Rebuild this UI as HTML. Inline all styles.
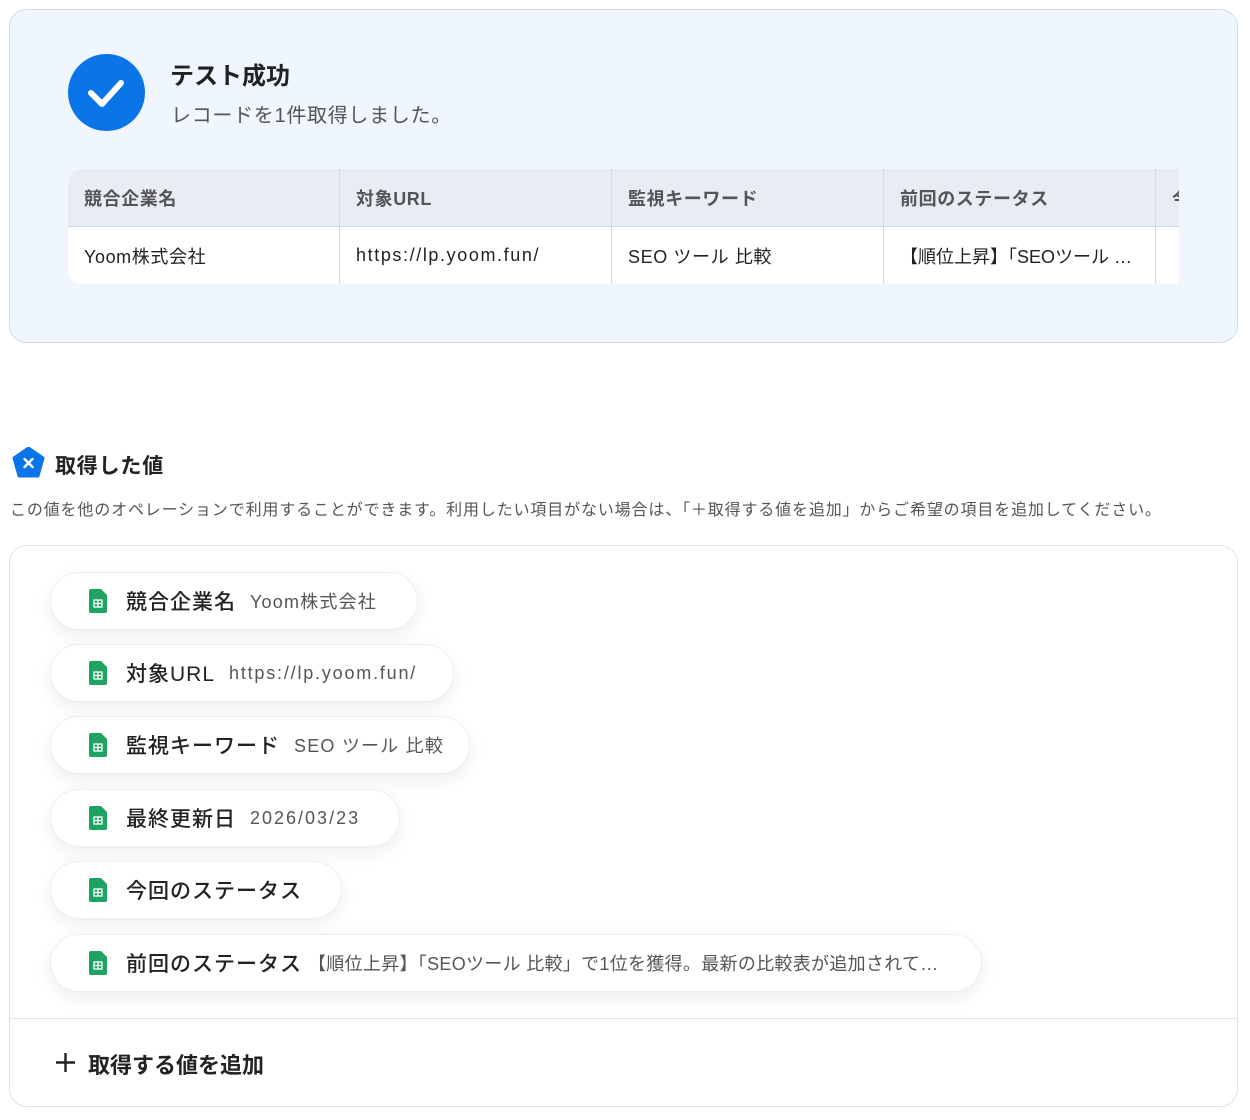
<!DOCTYPE html>
<html><head><meta charset="utf-8"><style>
*{box-sizing:border-box;margin:0;padding:0}
body{width:1250px;height:1120px;background:#fff;font-family:"Liberation Sans","Noto Sans CJK JP",sans-serif;position:relative;overflow:hidden;color:#222}
.abs{position:absolute}
.card{left:9px;top:9px;width:1229px;height:334px;background:#eff6fe;border:1px solid #d3dce6;border-radius:18px}
.tbl{left:68px;top:169px;width:1111px;height:115px;border-radius:14px 0 0 14px;overflow:hidden;background:#fff}
.th{top:0;height:58px;background:#e8ecf3;border-bottom:1px solid #d5dbe3;font-weight:600}
.cell{position:absolute;font-size:18px;padding-left:16px;display:flex;align-items:center;border-right:1px solid #d5dbe3;white-space:nowrap;overflow:hidden;letter-spacing:.6px}
.box{left:9px;top:545px;width:1229px;height:562px;border:1px solid #e2e2e2;border-radius:18px}
.pill{position:absolute;left:50px;height:58px;background:#fff;border:1px solid #eee;border-radius:29px;box-shadow:0 6px 18px rgba(0,0,0,.07);display:flex;align-items:center;padding-left:38px;white-space:nowrap}
.pill .lb{font-size:21px;font-weight:500;color:#222;margin-left:19px;letter-spacing:1px}
.pill .v{font-size:18px;color:#555;margin-left:14px;letter-spacing:1.2px}
</style></head><body>
<div class="abs card"></div>
<svg class="abs" style="left:68px;top:54px" width="77" height="77" viewBox="0 0 77 77"><circle cx="38.5" cy="38.5" r="38.5" fill="#0a74e9"/><path d="M23 39 L34 50 L53 29" stroke="#fff" stroke-width="6" fill="none" stroke-linecap="round" stroke-linejoin="round"/></svg>
<div class="abs" style="left:170px;top:56px;font-size:24px;font-weight:bold;color:#222">テスト成功</div>
<div class="abs" style="left:171px;top:99px;font-size:20px;color:#555;letter-spacing:.7px">レコードを1件取得しました。</div>
<div class="abs tbl">
<div class="cell th" style="left:0;width:272px;color:#555">競合企業名</div>
<div class="cell th" style="left:272px;width:272px;color:#555">対象URL</div>
<div class="cell th" style="left:544px;width:272px;color:#555">監視キーワード</div>
<div class="cell th" style="left:816px;width:272px;color:#555">前回のステータス</div>
<div class="cell th" style="left:1088px;width:40px;color:#555">今</div>
<div class="cell" style="left:0;top:58px;height:57px;width:272px">Yoom株式会社</div>
<div class="cell" style="left:272px;top:58px;height:57px;width:272px;letter-spacing:1.6px">https://lp.yoom.fun/</div>
<div class="cell" style="left:544px;top:58px;height:57px;width:272px">SEO ツール 比較</div>
<div class="cell" style="left:816px;top:58px;height:57px;width:272px;letter-spacing:0">【順位上昇】「SEOツール …</div>
<div class="cell" style="left:1088px;top:58px;height:57px;width:40px"></div>
</div>
<svg class="abs" style="left:12px;top:447px" width="33" height="32" viewBox="0 0 33 32"><path d="M16.5 1 L31 11 L26 29 L7 29 L2 11 Z" fill="#0a74e9" stroke="#0a74e9" stroke-width="3" stroke-linejoin="round"/><path d="M12.5 12 L20.5 20 M20.5 12 L12.5 20" stroke="#fff" stroke-width="2.4" stroke-linecap="round"/></svg>
<div class="abs" style="left:55px;top:450px;font-size:21px;font-weight:bold;letter-spacing:.8px">取得した値</div>
<div class="abs" style="left:10px;top:496px;font-size:16px;color:#555;white-space:nowrap;letter-spacing:.85px">この値を他のオペレーションで利用することができます。利用したい項目がない場合は、「＋取得する値を追加」からご希望の項目を追加してください。</div>
<div class="abs box"></div>
<div class="abs" style="left:10px;top:1018px;width:1227px;height:1px;background:#e4e4e4"></div>
<svg width="0" height="0" style="position:absolute"><defs><g id="sh"><path d="M0 2 Q0 0 2 0 L12 0 L18 6 L18 22 Q18 24 16 24 L2 24 Q0 24 0 22 Z" fill="#1ea362"/><rect x="5" y="11" width="8" height="7" fill="none" stroke="#fff" stroke-width="1.3"/><path d="M5 14.5 H13 M9 11 V18" stroke="#fff" stroke-width="1.3"/></g></defs></svg>
<div class="pill" style="top:572px;width:368px"><svg width="18" height="24"><use href="#sh"/></svg><span class="lb">競合企業名</span><span class="v">Yoom株式会社</span></div>
<div class="pill" style="top:644px;width:404px"><svg width="18" height="24"><use href="#sh"/></svg><span class="lb">対象URL</span><span class="v" style="letter-spacing:1.8px">https://lp.yoom.fun/</span></div>
<div class="pill" style="top:716px;width:420px"><svg width="18" height="24"><use href="#sh"/></svg><span class="lb">監視キーワード</span><span class="v">SEO ツール 比較</span></div>
<div class="pill" style="top:789px;width:350px"><svg width="18" height="24"><use href="#sh"/></svg><span class="lb">最終更新日</span><span class="v" style="letter-spacing:2px">2026/03/23</span></div>
<div class="pill" style="top:861px;width:292px"><svg width="18" height="24"><use href="#sh"/></svg><span class="lb">今回のステータス</span></div>
<div class="pill" style="top:934px;width:932px"><svg width="18" height="24"><use href="#sh"/></svg><span class="lb">前回のステータス</span><span class="v" style="margin-left:6px;letter-spacing:.3px">【順位上昇】「SEOツール 比較」で1位を獲得。最新の比較表が追加されて…</span></div>
<svg class="abs" style="left:55px;top:1052px" width="21" height="21"><path d="M10.5 1 V20 M1 10.5 H20" stroke="#222" stroke-width="2.4"/></svg>
<div class="abs" style="left:88px;top:1048px;font-size:22px;font-weight:bold;color:#222">取得する値を追加</div>
</body></html>
